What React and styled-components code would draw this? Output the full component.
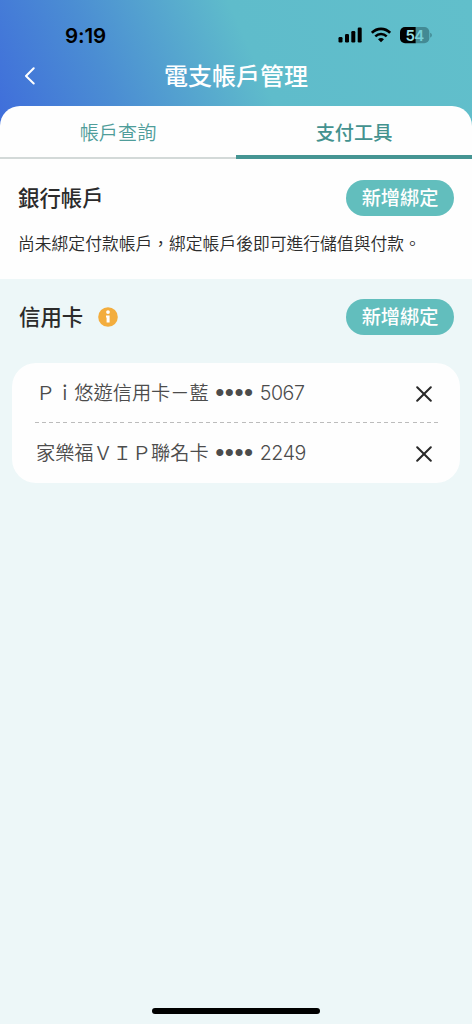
import React from 'react';
import styled, { createGlobalStyle } from 'styled-components';

const Global = createGlobalStyle`
  * { box-sizing: border-box; }
  body { margin: 0; background: #edf7f8; }
  button { border: 0; padding: 0; margin: 0; background: none; font: inherit; color: inherit; }
`;

const Screen = styled.div`
  width: 472px;
  height: 1024px;
  display: flex;
  flex-direction: column;
  overflow: hidden;
  background: #edf7f8;
  font-family: "Noto Sans CJK TC", sans-serif;
  color: #2b2b2b;
`;

const Hero = styled.header`
  height: 130px;
  flex: none;
  background: linear-gradient(66deg, #3f6ddb 0%, #4b8dd3 24%, #5fbccb 54%, #61bfcb 100%);
`;

const StatusBar = styled.div`
  height: 52px;
  padding: 19px 39px 0 65px;
  display: flex;
  justify-content: space-between;
  align-items: center;
  color: #000;
`;

const Clock = styled.span`
  font: 600 20.5px/33px Inter, sans-serif;
  letter-spacing: -0.1px;
`;

const StatusIcons = styled.div`
  display: flex;
  align-items: center;
  height: 33px;
  padding-bottom: 1px;
`;

const NavBar = styled.div`
  height: 48px;
  display: grid;
  grid-template-columns: 60px 1fr 60px;
  align-items: center;
`;

const BackButton = styled.button`
  height: 48px;
  padding-left: 24px;
  display: flex;
  align-items: center;
`;

const Title = styled.h1`
  margin: 0;
  text-align: center;
  font-size: 24px;
  line-height: 46px;
  height: 48px;
  font-weight: 500;
  color: #fff;
`;

const Sheet = styled.main`
  margin-top: -24px;
  flex: none;
  height: 173px;
  border-radius: 20px 20px 0 0;
  overflow: hidden;
  background: #fefefe;
`;

const Tabs = styled.nav`
  display: flex;
  height: 53px;
`;

const Tab = styled.button`
  flex: 1;
  height: 53px;
  padding-bottom: 1px;
  font-size: 19.2px;
  line-height: 50px;
  font-weight: ${(p) => (p.$active ? 500 : 350)};
  color: ${(p) => (p.$active ? '#43928f' : '#4f9d9a')};
  box-shadow: inset 0 ${(p) => (p.$active ? '-4px 0 #459593' : '-2px 0 #d3d9d8')};
`;

const SectionHeader = styled.div`
  height: 36px;
  margin-top: ${(p) => p.$top}px;
  padding: 0 18px 0 ${(p) => p.$left}px;
  display: flex;
  align-items: center;
`;

const SectionTitle = styled.h2`
  margin: 0 auto 0 0;
  height: 36px;
  display: flex;
  align-items: center;
  gap: 15px;
  font-size: 21.4px;
  line-height: 34px;
  font-weight: 500;
`;

const TitleText = styled.span`
  height: 36px;
`;

const AddButton = styled.button`
  width: 108px;
  height: 36px;
  padding-bottom: 2px;
  border-radius: 18px;
  background: #62bebd;
  color: #fff;
  font-size: 19.2px;
  line-height: 34px;
  font-weight: 500;
`;

const Note = styled.p`
  margin: 15px 0 0 18px;
  font-size: 16.8px;
  line-height: 24px;
  font-weight: 350;
  white-space: nowrap;
`;

const CardList = styled.ul`
  flex: none;
  list-style: none;
  margin: 28px 12px 0;
  padding: 0 22px 0 23px;
  height: 120px;
  border-radius: 24px;
  background: #fefefe;
`;

const CardRow = styled.li`
  height: 60px;
  display: flex;
  align-items: center;
  color: #4c4c4c;
`;

const CardName = styled.span`
  height: 60px;
  padding-left: 1px;
  font-size: 19.2px;
  line-height: 58px;
  font-weight: 350;
`;

const Mask = styled.span`
  height: 60px;
  margin-left: 6.5px;
  width: 39px;
  font: 400 26px/59px "Liberation Sans", sans-serif;
  letter-spacing: 0.5px;
`;

const Digits = styled.span`
  height: 60px;
  margin-left: 5.5px;
  font: 300 19.6px/60px Inter, sans-serif;
  letter-spacing: -0.4px;
`;

const RemoveButton = styled.button`
  margin-left: auto;
  padding: 1px 6px 0 0;
  display: flex;
`;

const Divider = styled.li`
  height: 1px;
  margin: -1px 0 0;
  background: repeating-linear-gradient(90deg, #bcbcbc 0 4px, transparent 4px 7.125px);
`;

const HomeArea = styled.footer`
  margin-top: auto;
  height: 16px;
  display: flex;
  justify-content: center;
`;

const HomeIndicator = styled.div`
  width: 168px;
  height: 6px;
  border-radius: 3px;
  background: #000;
`;

const SignalIcon = styled.svg`
  margin-top: 0;
`;

const WifiIcon = styled.svg`
  margin-left: 9px;
`;

const BatteryIcon = styled.svg`
  margin-left: 8px;
`;

const BatteryText = styled.text`
  font: 600 15px Inter, sans-serif;
`;

const Signal = () => (
  <SignalIcon width="24" height="16" viewBox="0 0 24 16">
    <rect x="0.5" y="10" width="4" height="5.5" rx="1.2" />
    <rect x="7" y="7" width="4" height="8.5" rx="1.2" />
    <rect x="13.3" y="4" width="4" height="11.5" rx="1.2" />
    <rect x="19.7" y="0.5" width="4" height="15" rx="1.2" />
  </SignalIcon>
);

const Wifi = () => (
  <WifiIcon width="20" height="16" viewBox="0 0 20 16">
    <path d="M0.9 5.8C6 0.6 14 0.6 19.1 5.8" fill="none" stroke="#000" strokeWidth="2.6" />
    <path d="M4.3 9.3C7.5 6.2 12.5 6.2 15.7 9.3" fill="none" stroke="#000" strokeWidth="2.5" />
    <path d="M10 15.2 7 12.2c1.7-1.5 4.3-1.5 6 0z" />
  </WifiIcon>
);

const Battery = () => (
  <BatteryIcon width="34" height="18" viewBox="0 0 34 18">
    <path d="M6 1H16.8V17.2H6A5 5 0 0 1 1 12.2V6A5 5 0 0 1 6 1Z" />
    <path d="M16.8 1h8.5a5 5 0 0 1 5 5v6.2a5 5 0 0 1-5 5h-8.5Z" fill="#438a94" />
    <path d="M31.2 6.8c2.2.7 2.2 4.1 0 4.8Z" fill="#438a94" />
    <BatteryText x="6.4" y="14.5" fill="#9de0e6">5</BatteryText>
    <BatteryText x="15.2" y="14.5" fill="#78d0d8">4</BatteryText>
  </BatteryIcon>
);

const Info = () => (
  <svg width="20" height="20" viewBox="0 0 20 20">
    <circle cx="10" cy="10" r="9.8" fill="#f3ad3d" />
    <circle cx="10" cy="5.1" r="1.9" fill="#fff" />
    <path d="M8 8.6h3.6v7H8.6V10.4H8z" fill="#fff" />
  </svg>
);

const Cross = () => (
  <svg width="16" height="16" viewBox="0 0 16 16">
    <path d="M1.2 1.2 14.8 14.8M14.8 1.2 1.2 14.8" stroke="#292929" strokeWidth="2" strokeLinecap="round" />
  </svg>
);

const Card = ({ name, last4 }) => (
  <CardRow>
    <CardName>{name}</CardName>
    <Mask>••••</Mask>
    <Digits>{last4}</Digits>
    <RemoveButton aria-label="移除"><Cross /></RemoveButton>
  </CardRow>
);

export default function App() {
  return (
    <Screen>
      <Global />
      <Hero>
        <StatusBar>
          <Clock>9:19</Clock>
          <StatusIcons><Signal /><Wifi /><Battery /></StatusIcons>
        </StatusBar>
        <NavBar>
          <BackButton aria-label="返回">
            <svg width="12" height="18" viewBox="0 0 12 18">
              <path d="M9.7 1.2 2 9l7.7 7.5" fill="none" stroke="#fff" strokeWidth="2" strokeLinecap="round" strokeLinejoin="round" />
            </svg>
          </BackButton>
          <Title>電支帳戶管理</Title>
        </NavBar>
      </Hero>
      <Sheet>
        <Tabs>
          <Tab>帳戶查詢</Tab>
          <Tab $active>支付工具</Tab>
        </Tabs>
        <SectionHeader $top={21} $left={18}>
          <SectionTitle><TitleText>銀行帳戶</TitleText></SectionTitle>
          <AddButton>新增綁定</AddButton>
        </SectionHeader>
        <Note>尚未綁定付款帳戶，綁定帳戶後即可進行儲值與付款。</Note>
      </Sheet>
      <SectionHeader $top={20} $left={19}>
        <SectionTitle><TitleText>信用卡</TitleText><Info /></SectionTitle>
        <AddButton>新增綁定</AddButton>
      </SectionHeader>
      <CardList>
        <Card name="Ｐｉ悠遊信用卡－藍" last4="5067" />
        <Divider />
        <Card name="家樂福ＶＩＰ聯名卡" last4="2249" />
      </CardList>
      <HomeArea><HomeIndicator /></HomeArea>
    </Screen>
  );
}
